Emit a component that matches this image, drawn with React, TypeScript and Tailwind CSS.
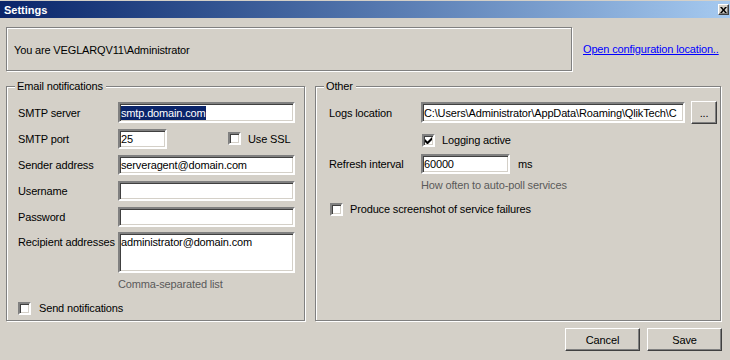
// Settings dialog — classic Windows look

const sunken =
  'border-2 border-t-[#808080] border-l-[#808080] border-b-white border-r-white bg-white shadow-[inset_1px_1px_0_#404040,inset_-1px_-1px_0_#d4d0c8]';

const raised =
  'border border-t-white border-l-white border-b-[#404040] border-r-[#404040] bg-[#d4d0c8] shadow-[inset_-1px_-1px_0_#808080]';

const etched =
  'border border-[#808080] shadow-[inset_1px_1px_0_#fff,1px_1px_0_#fff]';

// ─── Controls ─────────────────────────────────────────────────────────────────

function TextBox({
  value,
  width,
  height = 'h-[21px]',
  selected,
  multiline,
}: {
  value?: string;
  width: string;
  height?: string;
  selected?: boolean;
  multiline?: boolean;
}) {
  return (
    <div
      className={`${sunken} ${width} ${height} shrink-0 flex overflow-hidden whitespace-nowrap pl-[1px] ${
        multiline ? 'items-start pt-[1px]' : 'items-center'
      }`}
    >
      {value && (
        <span className={selected ? 'bg-[#0a246a] text-white leading-[14px]' : 'leading-[14px]'}>
          {value}
        </span>
      )}
    </div>
  );
}

function CheckBox({ checked, label, gap = 'ml-[7px]' }: { checked?: boolean; label: string; gap?: string }) {
  return (
    <div className="flex items-center">
      <div className={`${sunken} h-[13px] w-[13px] shrink-0 flex items-center justify-center`}>
        {checked && (
          <svg width="7" height="7" viewBox="0 0 7 7">
            <path d="M0 2v3l2 2h1l4-4V0L2.5 4.5z" fill="#000" />
          </svg>
        )}
      </div>
      <span className={gap}>{label}</span>
    </div>
  );
}

function Button({ children, width = 'w-[75px]' }: { children: React.ReactNode; width?: string }) {
  return (
    <div className={`${raised} ${width} h-[23px] flex items-center justify-center`}>{children}</div>
  );
}

function GroupBox({
  title,
  className,
  children,
}: {
  title: string;
  className: string;
  children: React.ReactNode;
}) {
  return (
    <div className={`relative ${etched} ${className}`}>
      <span className="absolute left-[8px] top-[-8px] bg-[#d4d0c8] pl-[2px] pr-[3px] leading-[14px]">
        {title}
      </span>
      {children}
    </div>
  );
}

// ─── Rows ─────────────────────────────────────────────────────────────────────

function Row({ label, children, labelWidth }: { label: string; children: React.ReactNode; labelWidth: string }) {
  return (
    <div className="flex items-center h-[21px]">
      <span className={`${labelWidth} shrink-0`}>{label}</span>
      {children}
    </div>
  );
}

// ─── App ──────────────────────────────────────────────────────────────────────

export default function App() {
  return (
    <div className="w-[730px] h-[360px] bg-[#d4d0c8] flex flex-col overflow-hidden text-[11px] leading-[14px] tracking-[-0.15px] text-black font-['Liberation_Sans',Arial,sans-serif]">
      {/* Title bar */}
      <div className="mt-[1px] h-[17px] flex items-center justify-between pl-[4px] pr-[1px] bg-gradient-to-r from-[#0a246a] to-[#a6caf0]">
        <span className="font-bold text-white tracking-normal">Settings</span>
        <div className={`${raised} w-[11px] h-[11px] flex items-center justify-center`}>
          <svg width="7" height="6" viewBox="0 0 7 6">
            <path d="M0 0h2l1.5 2L5 0h2L4.5 3 7 6H5L3.5 4 2 6H0l2.5-3z" fill="#000" />
          </svg>
        </div>
      </div>

      {/* User + config link */}
      <div className="flex items-center mt-[9px] pl-[6px]">
        <div className={`${etched} w-[566px] h-[44px] flex items-center pl-[7px] pt-[1px]`}>
          You are VEGLARQV11\Administrator
        </div>
        <a className="ml-[11px] text-[#0000ff] underline cursor-pointer">Open configuration location..</a>
      </div>

      {/* Groups */}
      <div className="flex mt-[15px] pl-[6px] gap-[10px]">
        <GroupBox title="Email notifications" className="w-[299px] h-[235px] pl-[11px] pt-[15px]">
          <div className="flex flex-col gap-[5px]">
            <Row label="SMTP server" labelWidth="w-[100px]">
              <TextBox value="smtp.domain.com" width="w-[177px]" selected />
            </Row>
            <Row label="SMTP port" labelWidth="w-[100px]">
              <TextBox value="25" width="w-[49px]" height="h-[20px]" />
              <div className="ml-[61px]">
                <CheckBox label="Use SSL" />
              </div>
            </Row>
            <Row label="Sender address" labelWidth="w-[100px]">
              <TextBox value="serveragent@domain.com" width="w-[177px]" height="h-[20px]" />
            </Row>
            <Row label="Username" labelWidth="w-[100px]">
              <TextBox width="w-[177px]" height="h-[20px]" />
            </Row>
            <Row label="Password" labelWidth="w-[100px]">
              <TextBox width="w-[177px]" height="h-[20px]" />
            </Row>
            <div className="flex items-start">
              <span className="w-[100px] shrink-0 pt-[3px]">Recipient addresses</span>
              <TextBox value="administrator@domain.com" width="w-[177px]" height="h-[41px]" multiline />
            </div>
          </div>
          <div className="ml-[100px] mt-[4px] text-[#5a5a5a]">Comma-separated list</div>
          <div className="mt-[10px]">
            <CheckBox label="Send notifications" gap="ml-[8px]" />
          </div>
        </GroupBox>

        <GroupBox title="Other" className="w-[406px] h-[235px] pl-[13px] pt-[14px]">
          <div className="flex items-center h-[23px]">
            <span className="w-[92px] shrink-0">Logs location</span>
            <TextBox value="C:\Users\Administrator\AppData\Roaming\QlikTech\C" width="w-[264px]" />
            <div className="ml-[6px]">
              <Button width="w-[26px]">...</Button>
            </div>
          </div>
          <div className="ml-[93px] mt-[9px]">
            <CheckBox checked label="Logging active" />
          </div>
          <div className="flex items-center h-[20px] mt-[7px]">
            <span className="w-[92px] shrink-0">Refresh interval</span>
            <TextBox value="60000" width="w-[89px]" height="h-[20px]" />
            <span className="ml-[8px]">ms</span>
          </div>
          <div className="ml-[92px] mt-[4px] text-[#5a5a5a]">How often to auto-poll services</div>
          <div className="mt-[10px] ml-[1px]">
            <CheckBox label="Produce screenshot of service failures" />
          </div>
        </GroupBox>
      </div>

      {/* Buttons */}
      <div className="flex justify-end gap-[7px] pr-[8px] mt-[7px]">
        <Button>Cancel</Button>
        <Button>Save</Button>
      </div>
    </div>
  );
}
